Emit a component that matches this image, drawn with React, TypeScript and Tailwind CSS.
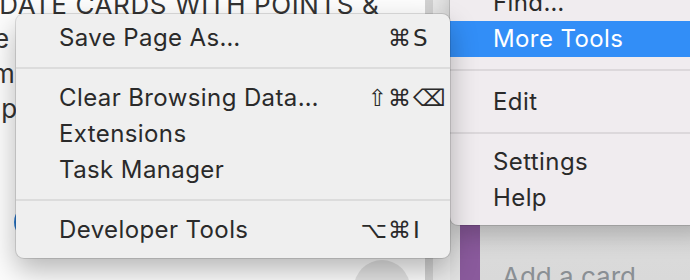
import React from 'react';

type Item = { label: string; mods?: string; keyChar?: string } | 'sep';

const subItems: Item[] = [
  { label: 'Save Page As…', mods: '⌘', keyChar: 'S' },
  'sep',
  { label: 'Clear Browsing Data…', mods: '⇧⌘', keyChar: '⌫' },
  { label: 'Extensions' },
  { label: 'Task Manager' },
  'sep',
  { label: 'Developer Tools', mods: '⌥⌘', keyChar: 'I' },
];

function Shortcut({ mods, keyChar }: { mods?: string; keyChar?: string }) {
  if (!mods) return null;
  return (
    <div className="flex items-center text-[23px] leading-none text-[#2a2a2a] [font-family:'DejaVu_Sans',sans-serif]">
      <span className="w-[60px] text-right tracking-[1px]">{mods}</span>
      <span className="w-[38px] pl-[1px] text-left">{keyChar}</span>
    </div>
  );
}

function SubMenu() {
  return (
    <div className="absolute left-[16px] top-[14px] w-[434px] rounded-[8px] bg-[#efefef] pt-[6px] pb-[10px] shadow-[0_0_0_1px_rgba(0,0,0,0.12),0_12px_28px_rgba(0,0,0,0.28)]">
      {subItems.map((it, i) =>
        it === 'sep' ? (
          <div key={i} className="my-[11px] h-[2px] bg-[#dcdcdc]" />
        ) : (
          <div key={i} className="flex h-[36px] items-center justify-between pl-[43px]">
            <span className="text-[24px] tracking-[0.4px] text-[#2a2a2a]">{it.label}</span>
            <Shortcut mods={it.mods} keyChar={it.keyChar} />
          </div>
        )
      )}
    </div>
  );
}

function MainMenu() {
  const row = 'flex h-[36px] items-center pl-[43px] text-[24px] tracking-[0.4px]';
  return (
    <div className="absolute left-[450px] top-[-21px] w-[260px] rounded-bl-[8px] bg-[#f0ecef] pt-[6px] pb-[9px] shadow-[0_0_0_1px_rgba(0,0,0,0.12),0_10px_24px_rgba(0,0,0,0.22)]">
      <div className={`${row} text-[#2a2a2a]`}>Find…</div>
      <div className={`${row} bg-[#328ef7] text-white`}>More Tools</div>
      <div className="mt-[12px] mb-[13px] h-[2px] bg-[#dcd8db]" />
      <div className={`${row} text-[#2a2a2a]`}>Edit</div>
      <div className="mt-[12px] mb-[10px] h-[2px] bg-[#dcd8db]" />
      <div className={`${row} text-[#2a2a2a]`}>Settings</div>
      <div className={`${row} text-[#2a2a2a]`}>Help</div>
    </div>
  );
}

export default function App() {
  return (
    <div className="relative h-[280px] w-[690px] overflow-hidden bg-white [font-family:Inter,'Liberation_Sans',sans-serif]">
      {/* page behind the menus */}
      <div className="flex h-full">
        {/* card detail column */}
        <div className="relative flex w-[425px] flex-col bg-[#fcfcfc]">
          <div className="-mt-[15px] ml-[-38px] whitespace-nowrap text-[26px] tracking-[0.6px] text-[#333]">UPDATE CARDS WITH POINTS &amp;</div>
          <div className="mt-[3px] flex flex-col gap-[11px] text-[26px] leading-[24px] text-[#333]">
            <span className="ml-[-6px] whitespace-nowrap">e Date</span>
            <span className="ml-[-8px] whitespace-nowrap">mple</span>
            <span className="ml-[-14px] whitespace-nowrap">up</span>
          </div>
          <div className="mt-auto flex items-end justify-between">
            <div className="mb-[40px] ml-[14px] h-[36px] w-[36px] rounded-full bg-[#2b7bd0]" />
            <div className="mr-[15px] mb-[-36px] h-[56px] w-[56px] rounded-full bg-[#e2e2e2]" />
          </div>
        </div>
        {/* scrollbar gutter */}
        <div className="w-[8px] bg-[#d2d2d2]" />
        <div className="w-[17px] bg-[#e9e9e9]" />
        {/* board list */}
        <div className="w-[10px] bg-[#e2e2e2]" />
        <div className="w-[20px] bg-[#8a5a9c]" />
        <div className="flex flex-1 flex-col bg-gradient-to-b from-[#e6e6e6] to-[#d9d9d9]">
          <div className="ml-[16px] mt-[225px] h-[4px] bg-[#cfcfcf]" />
          <div className="ml-[22px] mt-[32px] whitespace-nowrap text-[26px] text-[#8a8f94]">Add a card</div>
        </div>
      </div>

      <MainMenu />
      <SubMenu />
    </div>
  );
}
